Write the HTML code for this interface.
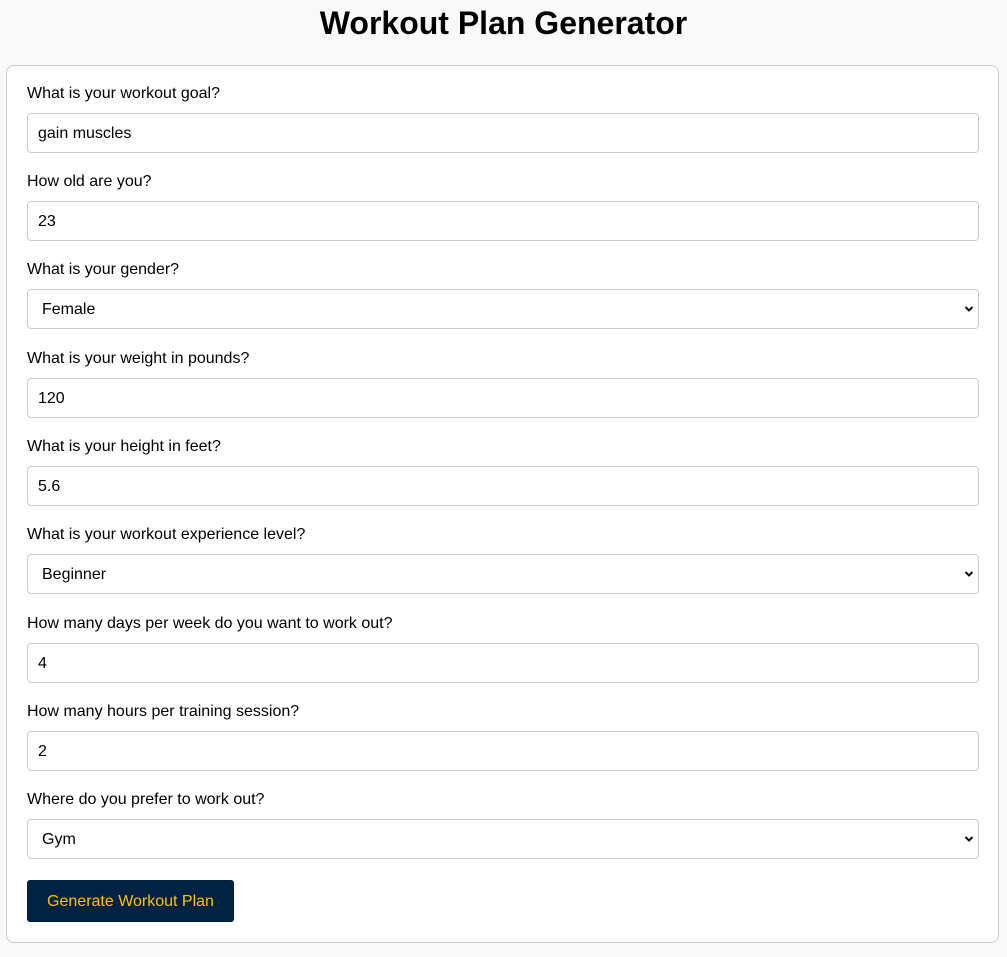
<!DOCTYPE html>
<html><head><style>
body{margin:0;background:#f9f9f9;font-family:"Liberation Sans",Arial,sans-serif;width:1007px;height:957px;overflow:hidden;position:relative}
h1{position:absolute;top:4px;left:0;width:1007px;margin:0;text-align:center;font-size:32px;font-weight:bold;color:#000;line-height:38px}
.card{position:absolute;left:6px;top:65px;width:991px;height:876px;background:#fff;border:1px solid #ccc;border-radius:8px}
.l{position:absolute;left:27px;font-size:16px;color:#000;line-height:18px}
.i{position:absolute;left:27px;width:950px;height:38px;border:1px solid #ccc;border-radius:4px;background:#fff;font-size:16px;line-height:40px;box-sizing:content-box}
.i span{position:absolute;left:10px}
.s span{left:14px}
.s svg{position:absolute;right:4px;top:15px}
.b{position:absolute;left:27px;top:880px;width:207px;height:42px;background:#022244;border-radius:3px;color:#ffc107;font-size:16px;line-height:43px;text-align:center}
</style></head><body>
<h1>Workout Plan Generator</h1>
<div class="card"></div>
<div class="l" style="top:85px">What is your workout goal?</div>
<div class="i" style="top:113px"><span>gain muscles</span></div>
<div class="l" style="top:173px">How old are you?</div>
<div class="i" style="top:201px"><span>23</span></div>
<div class="l" style="top:261px">What is your gender?</div>
<div class="i s" style="top:289px"><span>Female</span><svg width="10" height="8" viewBox="0 0 10 8"><path d="M1.5 2 L5 5.5 L8.5 2" stroke="#111" stroke-width="2" fill="none"/></svg></div>
<div class="l" style="top:350px">What is your weight in pounds?</div>
<div class="i" style="top:378px"><span>120</span></div>
<div class="l" style="top:438px">What is your height in feet?</div>
<div class="i" style="top:466px"><span>5.6</span></div>
<div class="l" style="top:526px">What is your workout experience level?</div>
<div class="i s" style="top:554px"><span>Beginner</span><svg width="10" height="8" viewBox="0 0 10 8"><path d="M1.5 2 L5 5.5 L8.5 2" stroke="#111" stroke-width="2" fill="none"/></svg></div>
<div class="l" style="top:615px">How many days per week do you want to work out?</div>
<div class="i" style="top:643px"><span>4</span></div>
<div class="l" style="top:703px">How many hours per training session?</div>
<div class="i" style="top:731px"><span>2</span></div>
<div class="l" style="top:791px">Where do you prefer to work out?</div>
<div class="i s" style="top:819px"><span>Gym</span><svg width="10" height="8" viewBox="0 0 10 8"><path d="M1.5 2 L5 5.5 L8.5 2" stroke="#111" stroke-width="2" fill="none"/></svg></div>
<div class="b">Generate Workout Plan</div>
</body></html>
